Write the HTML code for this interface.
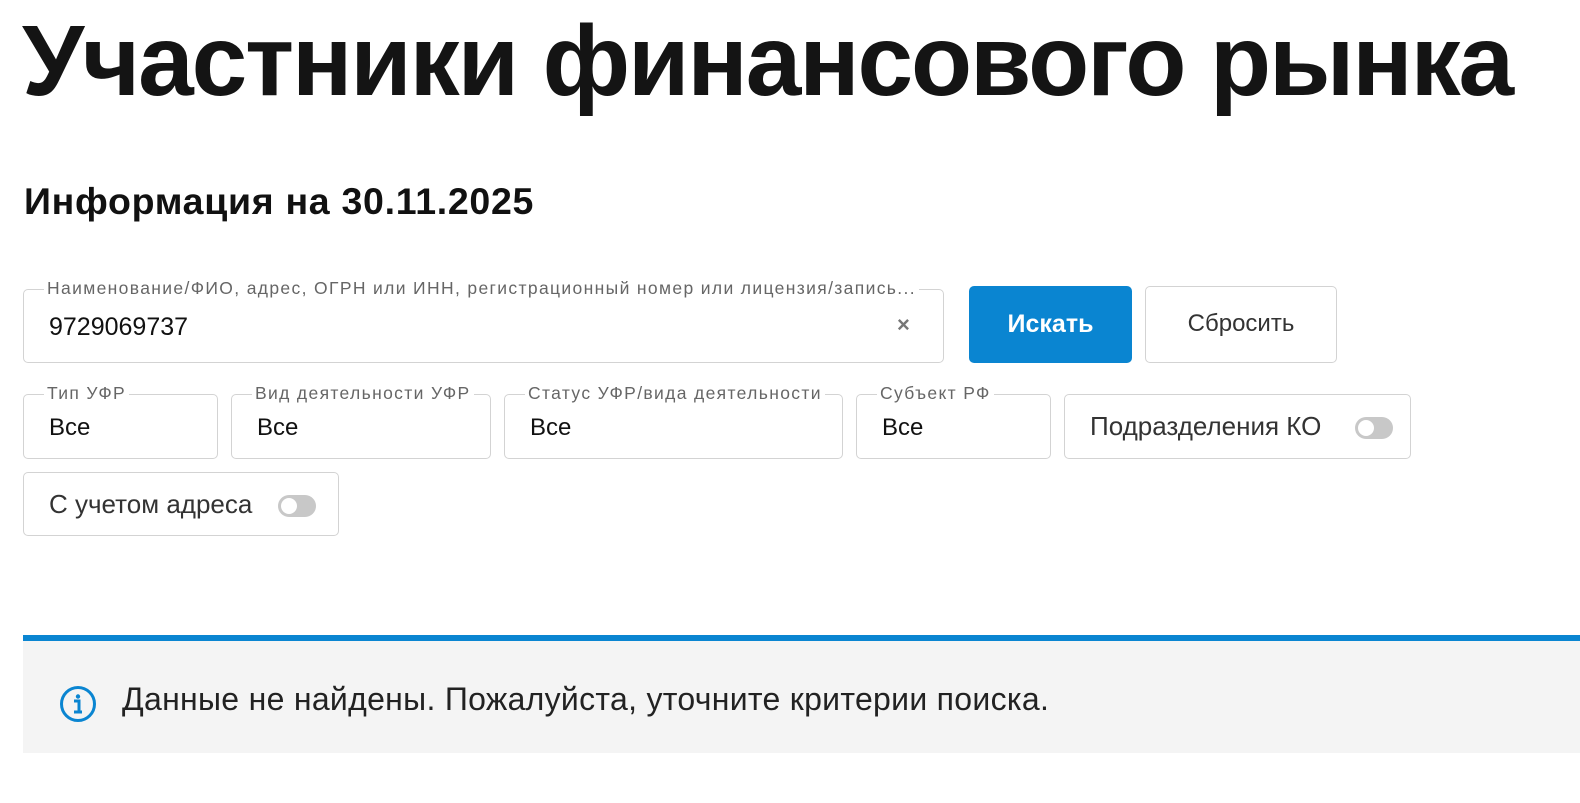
<!DOCTYPE html>
<html><head><meta charset="utf-8"><style>
*{box-sizing:border-box;margin:0;padding:0}
body{width:1580px;height:803px;background:#fff;font-family:"Liberation Sans",sans-serif;color:#111;position:relative;overflow:hidden}
.a{position:absolute}
h1{position:absolute;left:22px;top:4px;font-size:100px;font-weight:700;letter-spacing:-2.1px;white-space:nowrap;color:#141414}
h2{position:absolute;left:24px;top:180px;font-size:37.5px;font-weight:700;letter-spacing:0.7px;white-space:nowrap}
.box{position:absolute;border:1.5px solid #d3d3d3;border-radius:5px;background:#fff}
.lbl{position:absolute;top:-12px;left:20px;background:#fff;padding:0 3px;font-size:17.5px;letter-spacing:1.35px;color:#666;white-space:nowrap}
.val{position:absolute;left:25px;font-size:24px;color:#111;white-space:nowrap}
.tg{display:inline-block;width:38px;height:22px;border-radius:11px;background:#c8c8c8;position:relative;vertical-align:middle;margin-left:22px}
.tg::after{content:"";position:absolute;left:3px;top:3px;width:16px;height:16px;border-radius:50%;background:#fff}
</style></head><body>
<h1>Участники финансового рынка</h1>
<h2>Информация на 30.11.2025</h2>

<div class="box" style="left:23px;top:289px;width:921px;height:74px">
<div class="lbl">Наименование/ФИО, адрес, ОГРН или ИНН, регистрационный номер или лицензия/запись...</div>
<div class="val" style="top:23px;font-size:25px">9729069737</div>
<div class="a" style="left:873px;top:22px;font-size:22px;color:#777;font-weight:700">×</div>
</div>
<div class="a" style="left:969px;top:286px;width:163px;height:77px;background:#0a85d1;border-radius:5px;color:#fff;font-weight:700;font-size:25px;text-align:center;line-height:77px">Искать</div>
<div class="box" style="left:1145px;top:286px;width:192px;height:77px;text-align:center;line-height:74px;font-size:24px;color:#333">Сбросить</div>

<div class="box" style="left:23px;top:394px;width:195px;height:65px"><div class="lbl">Тип УФР</div><div class="val" style="top:19px">Все</div></div>
<div class="box" style="left:231px;top:394px;width:260px;height:65px"><div class="lbl">Вид деятельности УФР</div><div class="val" style="top:19px">Все</div></div>
<div class="box" style="left:504px;top:394px;width:339px;height:65px"><div class="lbl">Статус УФР/вида деятельности</div><div class="val" style="top:19px">Все</div></div>
<div class="box" style="left:856px;top:394px;width:195px;height:65px"><div class="lbl">Субъект РФ</div><div class="val" style="top:19px">Все</div></div>
<div class="box" style="left:1064px;top:394px;width:347px;height:65px"><div class="val" style="top:16px;color:#333;font-size:26px">Подразделения КО<span class="tg" style="margin-left:34px"></span></div></div>
<div class="box" style="left:23px;top:472px;width:316px;height:64px"><div class="val" style="top:16px;color:#333;font-size:26px">С учетом адреса<span class="tg" style="margin-left:26px"></span></div></div>

<div class="a" style="left:23px;top:635px;width:1557px;height:6px;background:#0a85d1"></div>
<div class="a" style="left:23px;top:641px;width:1557px;height:112px;background:#f4f4f4"></div>
<svg class="a" style="left:59px;top:685px" width="38" height="38" viewBox="0 0 38 38"><circle cx="19" cy="19" r="16.5" fill="none" stroke="#0a85d1" stroke-width="3"/><circle cx="19" cy="11.5" r="2.2" fill="#0a85d1"/><path d="M15 16h5v11M15 27h8" fill="none" stroke="#0a85d1" stroke-width="3"/></svg>
<div class="a" style="left:122px;top:681px;font-size:32px;letter-spacing:0.3px;color:#222;white-space:nowrap">Данные не найдены. Пожалуйста, уточните критерии поиска.</div>
</body></html>
